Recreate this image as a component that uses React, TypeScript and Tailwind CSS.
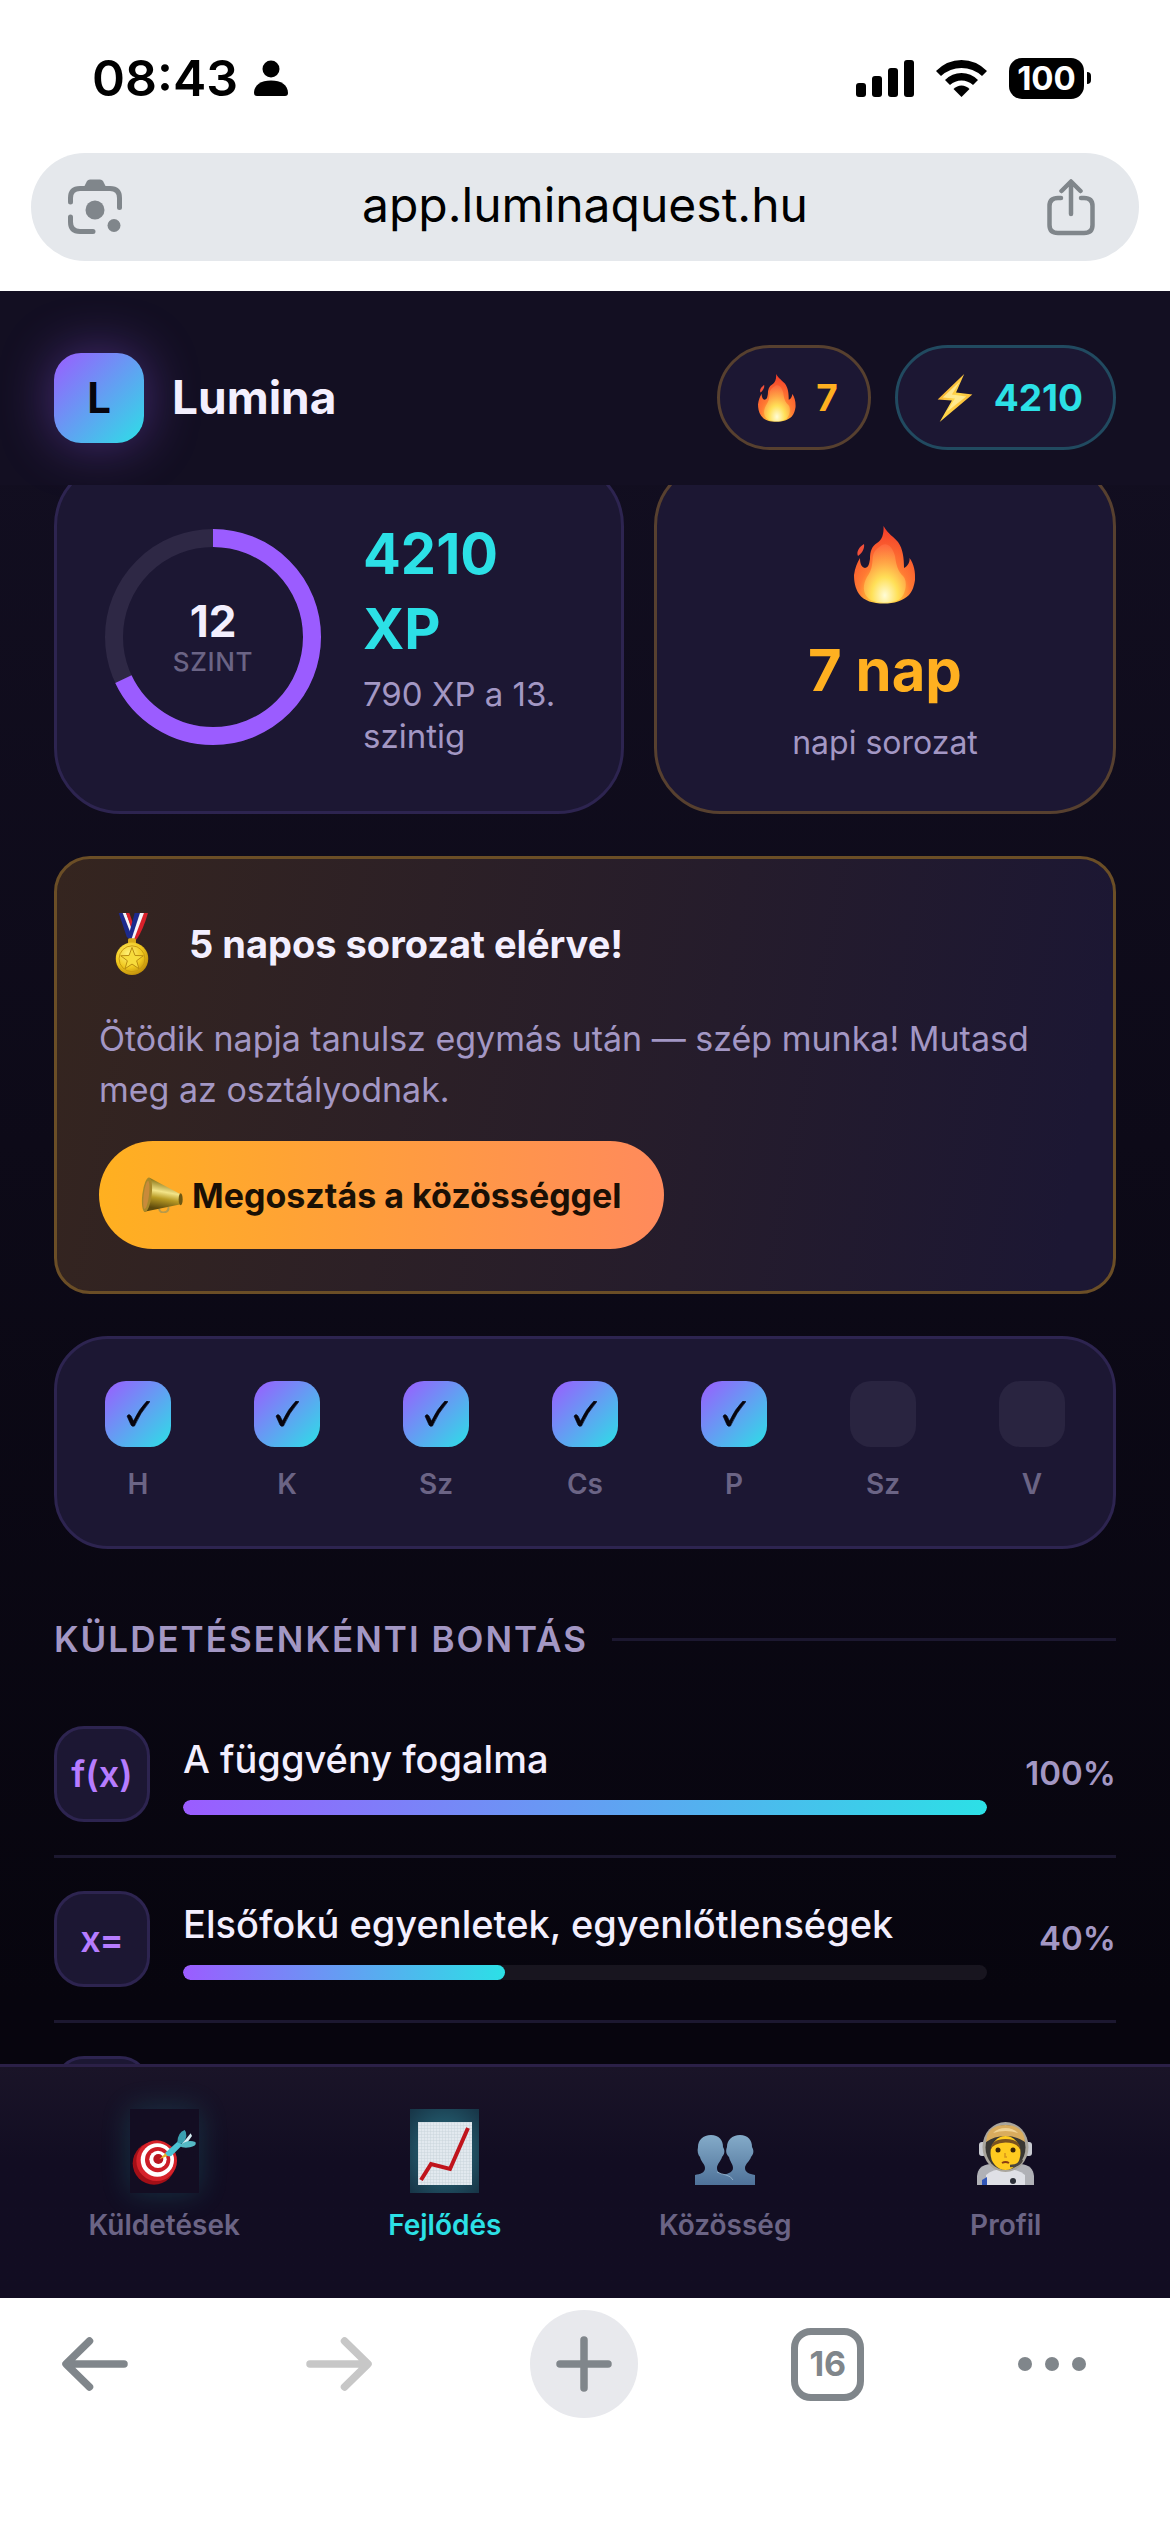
import type { ReactNode } from 'react';

type Day = { label: string; done: boolean };

type Quest = {
  symbol: string;
  title: string;
  percent: number;
};

type Tab = {
  label: string;
  icon: ReactNode;
  active?: boolean;
};

const days: Day[] = [
  { label: 'H', done: true },
  { label: 'K', done: true },
  { label: 'Sz', done: true },
  { label: 'Cs', done: true },
  { label: 'P', done: true },
  { label: 'Sz', done: false },
  { label: 'V', done: false },
];

const quests: Quest[] = [
  { symbol: 'f(x)', title: 'A függvény fogalma', percent: 100 },
  { symbol: 'x=', title: 'Elsőfokú egyenletek, egyenlőtlenségek', percent: 40 },
  { symbol: '', title: '', percent: 0 },
];

function Flame({ className }: { className: string }) {
  return (
    <svg viewBox="0 0 62 78" className={className} aria-hidden="true">
      <defs>
        <radialGradient id="flameOuter" cx="0.5" cy="0.9" r="0.85">
          <stop offset="0" stopColor="#fff6a0" />
          <stop offset="0.25" stopColor="#ffc93a" />
          <stop offset="0.5" stopColor="#ff7a33" />
          <stop offset="1" stopColor="#f5402a" />
        </radialGradient>
        <radialGradient id="flameInner" cx="0.5" cy="0.88" r="0.9">
          <stop offset="0" stopColor="#fffde0" />
          <stop offset="0.35" stopColor="#ffe45c" />
          <stop offset="0.7" stopColor="#ffa046" />
          <stop offset="1" stopColor="#ff6340" />
        </radialGradient>
      </defs>
      <path
        d="M29.500 0C34 8 40 11 44 16C49 23 50 32 50 42C54 40 56 36 55.500 32C60 38 61.500 46 61 54C60 60 59 64 55 69C49 75 40 77.500 30 77.500C19 77.500 10 75 5 68C1 62 0 55 0 49C1 42 3 37 6 32C6 37 7 41 11 42C15 41 15 38 16 33C16 25 18 20 23 17C28 14 30 8 29.500 0Z"
        fill="url(#flameOuter)"
      />
      <path
        d="M28 19C34 16 39 22 41 30C42 38 44 46 49 50C54 55 52 68 46 73C40 77 22 78 15 73C8 67 9 58 13 51C19 43 18 36 19 30C20 24 24 22 28 19Z"
        fill="url(#flameInner)"
        opacity="0.85"
      />
      <path d="M10 18C11 23 7 28 4 30C2 26 5 21 10 18Z" fill="#f2503a" />
    </svg>
  );
}

function Bolt() {
  return (
    <svg viewBox="0 0 34 47" className="h-12 w-[42px]" aria-hidden="true">
      <defs>
        <linearGradient id="bolt" x1="0" y1="0" x2="1" y2="1">
          <stop offset="0" stopColor="#f08c1c" />
          <stop offset="0.5" stopColor="#ffd84a" />
          <stop offset="1" stopColor="#f59a1f" />
        </linearGradient>
      </defs>
      <path d="M26 0L0 25L14 26L2 47L34 20L18 18Z" fill="url(#bolt)" />
      <path d="M22 7L5 23L17 24L9 37L28 22L14 20Z" fill="#fff0a0" opacity="0.8" />
    </svg>
  );
}

function Medal() {
  return (
    <svg viewBox="0 0 100 190" className="h-[63px] w-[66px]" aria-hidden="true">
      <defs>
        <radialGradient id="medal" cx="0.4" cy="0.35" r="0.7">
          <stop offset="0" stopColor="#fff27a" />
          <stop offset="0.6" stopColor="#f0c81e" />
          <stop offset="1" stopColor="#b98708" />
        </radialGradient>
      </defs>
      <path d="M10 0H22L50 62L42 80L34 72Z" fill="#1c2a8c" />
      <path d="M22 0H32L54 56L48 66Z" fill="#f4f4f8" />
      <path d="M32 0H42L58 46L52 58Z" fill="#d8202a" />
      <path d="M98 0H84L54 80H64Q84 50 98 0Z" fill="#d8202a" />
      <path d="M86 0H72L44 76L56 80Z" fill="#f4f4f8" />
      <path d="M74 0H58L38 74L48 80Z" fill="#1c2a8c" />
      <rect x="38" y="76" width="24" height="18" rx="5" fill="#d9ab1a" />
      <circle cx="50" cy="138" r="49" fill="url(#medal)" />
      <circle cx="50" cy="138" r="39" fill="none" stroke="#c99a10" strokeWidth="3" />
      <path
        d="M50 104L59 128L84 129L64 144L71 168L50 154L29 168L36 144L16 129L41 128Z"
        fill="#f7dc3c"
        stroke="#b98c10"
        strokeWidth="3"
      />
    </svg>
  );
}

function Megaphone() {
  return (
    <svg viewBox="0 0 126 108" className="h-9 w-[42px]" aria-hidden="true">
      <defs>
        <linearGradient id="horn" x1="0.5" y1="0" x2="0.3" y2="1">
          <stop offset="0.1" stopColor="#8f7a1c" />
          <stop offset="0.4" stopColor="#f3e488" />
          <stop offset="0.6" stopColor="#b89a24" />
          <stop offset="0.9" stopColor="#5e4a0c" />
        </linearGradient>
      </defs>
      <path d="M54 94Q56 108 70 106Q84 104 82 90" fill="none" stroke="#b89a4a" strokeWidth="6" />
      <path d="M26 2L116 50Q126 64 120 82L10 104Z" fill="url(#horn)" />
      <ellipse cx="18" cy="53" rx="14" ry="52" fill="#a8882a" transform="rotate(7 18 53)" />
      <ellipse cx="16" cy="54" rx="8" ry="42" fill="#c98a3a" transform="rotate(7 16 54)" />
      <ellipse cx="119" cy="67" rx="6" ry="18" fill="#6e5812" />
    </svg>
  );
}

function TargetIcon() {
  return (
    <svg viewBox="0 0 195 165" className="w-[65px]" aria-hidden="true">
      <circle cx="66" cy="100" r="64" fill="#a30f17" />
      <circle cx="74" cy="92" r="61" fill="#d6222a" />
      <circle cx="76" cy="90" r="50" fill="#fff" />
      <circle cx="77" cy="89" r="38" fill="#cc1d26" />
      <circle cx="78" cy="88" r="26" fill="#fff" />
      <circle cx="79" cy="87" r="15" fill="#b8161f" />
      <path d="M82 88L108 62L116 74Z" fill="#e5b427" />
      <path d="M100 68L138 34L152 44L118 78Q106 82 100 68Z" fill="#4cc4d4" />
      <path d="M136 38Q136 8 158 0Q170 12 154 42Z" fill="#3aa0b0" />
      <path d="M148 44L176 10L180 18L160 46Z" fill="#d5eef2" />
      <path d="M142 48Q166 26 190 36Q196 48 174 52Q154 56 142 48Z" fill="#55b9c4" />
    </svg>
  );
}

function ChartIcon() {
  return (
    <svg viewBox="0 0 54 63" className="w-[54px]" aria-hidden="true">
      <defs>
        <pattern id="chartGrid" width="3" height="3" patternUnits="userSpaceOnUse">
          <path d="M3 0H0V3" fill="none" stroke="#c3cfd8" strokeWidth="0.8" />
        </pattern>
      </defs>
      <rect width="54" height="63" fill="#e2e9ef" />
      <rect width="54" height="63" fill="url(#chartGrid)" />
      <path d="M3 58L13 42L32 47L50 6" fill="none" stroke="#c0141c" strokeWidth="4" />
    </svg>
  );
}

function PeopleIcon() {
  return (
    <svg viewBox="0 0 60 50" className="w-[60px]" aria-hidden="true">
      <defs>
        <linearGradient id="people" x1="0" y1="0" x2="0" y2="1">
          <stop offset="0" stopColor="#84abc9" />
          <stop offset="1" stopColor="#4f7299" />
        </linearGradient>
      </defs>
      <path
        d="M45 0C37 0 32 5 32 12C30 17 32 20 34 22C35 27 38 29 38 33C38 38 31 39 27 40V50H60V40C54 39 50 37 50 33C50 29 55 26 56 22C59 19 59 15 57 12C57 5 53 0 45 0Z"
        fill="url(#people)"
      />
      <path
        d="M16 0C8 0 3 5 3 12C2 16 3 20 5 22C6 27 10 29 10 33C10 38 5 39 0 40V50H38C38 43 35 41 30 40C25 39 22 37 22 33C22 29 26 26 27 22C30 19 30 15 28 12C28 5 24 0 16 0Z"
        fill="url(#people)"
      />
      <path d="M22 37Q26 39 31 40Q36 41 38 45" fill="none" stroke="#9dbdd6" strokeWidth="0.8" />
    </svg>
  );
}

function AstronautIcon() {
  return (
    <svg viewBox="0 0 57 63" className="w-[57px]" aria-hidden="true">
      <path d="M0 63V54Q1 43 13 42H44Q56 43 57 54V63Z" fill="#b0b1b6" />
      <path d="M9 63V53Q15 47 28 47Q42 47 48 53V63Z" fill="#dfe0e6" />
      <path d="M5 58L10 55V63H5Z" fill="#3156b8" />
      <rect x="2" y="20" width="7" height="14" rx="3" fill="#c9cbd1" />
      <rect x="48" y="20" width="7" height="14" rx="3" fill="#c9cbd1" />
      <ellipse cx="28.500" cy="25" rx="23" ry="25" fill="#a9a59c" />
      <ellipse cx="28.500" cy="25.500" rx="20" ry="22.500" fill="#3a3834" />
      <ellipse cx="28.500" cy="31" rx="15" ry="17" fill="#ffcb20" />
      <path d="M13.500 28Q14 17 28.500 17T43.500 28Q41 21 28.500 20.500Q16 21 13.500 28Z" fill="#7a5220" />
      <path d="M9 20Q10 3 28.500 3Q47 3 48 20Q40 14 28.500 14Q17 14 9 20Z" fill="#d9ac5e" />
      <path d="M16 11Q21 6 28.500 6Q36 6 41 11Q35 9 28.500 9Q22 9 16 11Z" fill="#f0d294" />
      <circle cx="21" cy="28" r="2.500" fill="#3b2508" />
      <circle cx="36" cy="28" r="2.500" fill="#3b2508" />
      <path d="M28 31V35H30" fill="none" stroke="#d9971c" strokeWidth="1.500" />
      <path d="M25 41Q28.500 39 32 41" fill="none" stroke="#8a3d12" strokeWidth="2" />
      <path d="M45 38Q42 44 33 44" fill="none" stroke="#4a463f" strokeWidth="2.500" />
      <circle cx="36" cy="59" r="3" fill="#2c2f38" />
    </svg>
  );
}

const tabs: Tab[] = [
  { label: 'Küldetések', icon: <TargetIcon /> },
  { label: 'Fejlődés', icon: <ChartIcon />, active: true },
  { label: 'Közösség', icon: <PeopleIcon /> },
  { label: 'Profil', icon: <AstronautIcon /> },
];

function StatusBar() {
  return (
    <div className="flex h-15 items-center justify-between pr-[79px] pl-23 text-black">
      <div className="flex items-center gap-4">
        <span className="text-[50px] leading-none font-semibold">08:43</span>
        <svg viewBox="0 0 34 36" className="w-[34px]" aria-hidden="true">
          <circle cx="17" cy="9" r="8.500" />
          <path d="M0 33C0 25 7 20.500 17 20.500S34 25 34 33Q34 36 31 36H3Q0 36 0 33Z" />
        </svg>
      </div>
      <div className="flex items-center gap-[22px]">
        <svg viewBox="0 0 58 37" className="w-[58px]" aria-hidden="true">
          <rect x="0" y="23" width="10" height="14" rx="3" />
          <rect x="16" y="16" width="10" height="21" rx="3" />
          <rect x="32" y="8" width="10" height="29" rx="3" />
          <rect x="48" y="0" width="10" height="37" rx="3" />
        </svg>
        <svg viewBox="0 0 51 37" className="w-[51px]" aria-hidden="true">
          <path d="M0 11Q11 0 25.500 0T51 11L46 16Q37 8 25.500 8T5 16Z" />
          <path d="M9 20Q16 13 25.500 13T42 20L37 25Q32 20.500 25.500 20.500T14 25Z" />
          <path d="M17.500 29Q21 25.500 25.500 25.500T33.500 29L25.500 37Z" />
        </svg>
        <div className="flex items-center gap-[3px]">
          <span className="flex h-[41px] w-[75px] items-center justify-center rounded-[13px] bg-black text-[33px] leading-none font-bold text-white">
            100
          </span>
          <span className="h-3 w-1 rounded-r-full bg-black" />
        </div>
      </div>
    </div>
  );
}

function AddressBar() {
  return (
    <div className="mx-[31px] mt-[45px] flex h-27 items-center justify-between rounded-full bg-[#e5e8ec] pr-11 pl-9 text-[#80868b]">
      <button type="button" aria-label="Keresés képpel">
        <svg viewBox="0 0 56 56" className="w-14" fill="none" stroke="currentColor" strokeWidth="5" strokeLinecap="round">
          <path d="M3.500 23V19Q3.500 9.500 13 9.500H43Q52.500 9.500 52.500 19V28.500" />
          <path d="M3.500 38V43Q3.500 52.500 13 52.500H26" />
          <path d="M17 8L20 2Q21 .500 23 .500H33Q35 .500 36 2L39 8Z" fill="currentColor" stroke="none" />
          <circle cx="28" cy="31" r="9.500" fill="currentColor" stroke="none" />
          <circle cx="47" cy="46.500" r="6.500" fill="currentColor" stroke="none" />
        </svg>
      </button>
      <a href="#" className="pb-1 text-[48px] leading-none text-black">
        app.luminaquest.hu
      </a>
      <button type="button" aria-label="Megosztás">
        <svg viewBox="0 0 48 57" className="w-12" fill="none" stroke="currentColor" strokeWidth="4.500" strokeLinecap="round" strokeLinejoin="round">
          <path d="M14 19H11Q2.500 19 2.500 27V46Q2.500 54 11 54H37Q45.500 54 45.500 46V27Q45.500 19 37 19H34" />
          <path d="M24 35V3M14.500 12L24 2.500L33.500 12" />
        </svg>
      </button>
    </div>
  );
}

function AppHeader() {
  return (
    <header className="flex items-center justify-between bg-[#130f22] px-[54px] pt-[54px] pb-[35px]">
      <div className="flex items-center gap-7">
        <div className="flex size-[90px] items-center justify-center rounded-[27px] bg-linear-to-br/srgb from-[#9b5cff] to-[#2ce0e6] text-[42px] font-bold text-[#07050e] shadow-[0_0_54px_rgba(155,92,255,0.4)]">
          L
        </div>
        <span className="text-[46px] font-bold text-[#f3effe]">Lumina</span>
      </div>
      <div className="flex gap-6 text-[37px] font-bold">
        <div className="flex h-[105px] items-center gap-[18px] rounded-full border-3 border-[#57402f] bg-[#1c1733] px-[30px] pl-9 text-[#ffb020]">
          <span className="flex w-[42px] justify-center">
            <Flame className="h-12" />
          </span>
          7
        </div>
        <div className="flex h-[105px] items-center gap-[18px] rounded-full border-3 border-[#214a60] bg-[#1c1733] pr-[30px] pl-9 text-[#2ce0e6]">
          <Bolt />
          4210
        </div>
      </div>
    </header>
  );
}

function LevelRing() {
  return (
    <div className="grid size-54 shrink-0 place-items-center">
      <svg viewBox="0 0 216 216" className="col-start-1 row-start-1 size-full -rotate-90" aria-hidden="true">
        <circle cx="108" cy="108" r="99" fill="none" stroke="#2e2845" strokeWidth="18" />
        <circle
          cx="108"
          cy="108"
          r="99"
          fill="none"
          stroke="#9b5cff"
          strokeWidth="18"
          pathLength="100"
          strokeDasharray="68 100"
        />
      </svg>
      <div className="col-start-1 row-start-1 text-center">
        <div className="text-[44px] leading-[50px] font-bold text-[#f3effe]">12</div>
        <div className="text-[26px] leading-8 font-medium tracking-wide text-[#6b6485]">SZINT</div>
      </div>
    </div>
  );
}

function Stats() {
  return (
    <section className="grid grid-cols-[570fr_462fr] gap-[30px]">
      <div className="flex h-[354px] items-center gap-[42px] rounded-[66px] border-3 border-[#2d2450] bg-[#1c1733] px-12">
        <LevelRing />
        <div>
          <div className="w-min text-[56px] leading-[75px] font-bold text-[#2ce0e6]">4210 XP</div>
          <div className="mt-[6px] text-[33px] leading-[42px] text-[#a397c4]">790 XP a 13. szintig</div>
        </div>
      </div>
      <div className="flex h-[354px] flex-col items-center justify-center rounded-[66px] border-3 border-[#57402f] bg-[#1c1733] pt-4">
        <Flame className="h-[78px]" />
        <div className="mt-[29px] text-[58px] leading-[75px] font-bold text-[#ffb020]">7 nap</div>
        <div className="mt-[14px] text-[32px] leading-[42px] text-[#a397c4]">napi sorozat</div>
      </div>
    </section>
  );
}

function StreakBanner() {
  return (
    <section className="mt-[42px] rounded-[36px] border-3 border-[#6b4e26] bg-linear-100/srgb from-[#35251f] to-[#1c1733] to-95% p-[42px]">
      <div className="flex items-center gap-6">
        <Medal />
        <h2 className="text-[38px] leading-[86px] font-bold text-[#f3effe]">5 napos sorozat elérve!</h2>
      </div>
      <p className="mt-[26px] text-[34px] leading-[51px] text-[#a397c4]">
        Ötödik napja tanulsz egymás után — szép munka! Mutasd meg az osztályodnak.
      </p>
      <button
        type="button"
        className="mt-[26px] flex h-27 items-center gap-[9px] rounded-full bg-linear-to-r/srgb from-[#ffb020] to-[#ff8a5c] px-[42px] text-[34px] font-bold text-[#1a1005]"
      >
        <Megaphone />
        Megosztás a közösséggel
      </button>
    </section>
  );
}

function WeekCard() {
  return (
    <section className="mt-[42px] flex justify-between rounded-[54px] border-3 border-[#2d2450] bg-[#1c1733] px-12 py-[42px]">
      {days.map((day, idx) => (
        <div key={idx} className="flex w-[66px] flex-col items-center gap-[18px]">
          <div
            className={`flex size-[66px] items-center justify-center rounded-[21px] ${
              day.done ? 'bg-linear-to-br/srgb from-[#9b5cff] to-[#2ce0e6]' : 'bg-[#292440]'
            }`}
          >
            {day.done && (
              <svg viewBox="0 0 24 26" className="h-[26px]" aria-label="kész">
                <path d="M1 15Q3 12 5 15L7.500 20Q13 8 21 0L24 .500Q14 12 8.500 25Q6 26 5 24Z" fill="#07050e" stroke="#07050e" strokeWidth="0.6" strokeLinejoin="round" />
              </svg>
            )}
          </div>
          <span className="text-[28px] leading-[39px] font-semibold text-[#6b6485]">{day.label}</span>
        </div>
      ))}
    </section>
  );
}

function QuestRow({ quest }: { quest: Quest }) {
  return (
    <li className="flex items-center border-b-3 border-[#1c1830] py-[33px]">
      <div className="flex size-24 shrink-0 items-center justify-center rounded-[30px] border-3 border-[#2d2450] bg-[#1c1733] text-[36px] font-semibold text-[#b67cff]">
        {quest.symbol}
      </div>
      <div className="ml-[33px] flex-1">
        <div className="text-[38px] leading-[51px] font-medium text-[#f3effe]">{quest.title}</div>
        <div className="mt-[15px] h-[15px] overflow-hidden rounded-full bg-[#18151f]">
          <div
            className="h-full rounded-full bg-linear-to-r/srgb from-[#9b5cff] to-[#2ce0e6]"
            style={{ width: `${quest.percent}%` }}
          />
        </div>
      </div>
      <div className="ml-[33px] w-24 text-right text-[33px] font-semibold text-[#a397c4]">
        {quest.title && `${quest.percent}%`}
      </div>
    </li>
  );
}

function TabBar() {
  return (
    <nav className="grid grid-cols-4 border-t-3 border-[#2b2047] bg-linear-to-b from-[#1a1428] to-[#120d22] to-40% px-6 pt-[42px] pb-[55px]">
      {tabs.map((tab) => (
        <a
          key={tab.label}
          href="#"
          className={`flex flex-col items-center gap-[14px] text-[28px] leading-9 font-semibold ${
            tab.active ? 'text-[#2ce0e6]' : 'text-[#6b6485]'
          }`}
        >
          <span
            className={`flex h-[84px] w-[69px] items-end justify-center pb-2 ${
              tab.active ? 'bg-radial from-[#2a7385] to-[#173446]' : ''
            } ${tab.label === 'Küldetések' ? 'bg-[#130d22] shadow-[0_0_30px_rgba(44,224,230,0.18)]' : ''}`}
          >
            {tab.icon}
          </span>
          {tab.label}
        </a>
      ))}
    </nav>
  );
}

function BrowserToolbar() {
  return (
    <div className="flex items-center justify-between bg-white pt-3 pr-21 pb-[114px] pl-[41px] text-[#80868b]">
      <button type="button" aria-label="Vissza" className="flex size-27 items-center justify-center">
        <svg viewBox="0 0 66 54" className="w-[66px]" fill="none" stroke="currentColor" strokeWidth="7.500" strokeLinecap="round" strokeLinejoin="round">
          <path d="M62 27H5M27.500 4L4 27L27.500 50" />
        </svg>
      </button>
      <button type="button" aria-label="Előre" className="flex size-27 items-center justify-center text-[#c7c7c7]">
        <svg viewBox="0 0 66 54" className="w-[66px]" fill="none" stroke="currentColor" strokeWidth="7.500" strokeLinecap="round" strokeLinejoin="round">
          <path d="M4 27H61M38.500 4L62 27L38.500 50" />
        </svg>
      </button>
      <button type="button" aria-label="Új lap" className="flex size-27 items-center justify-center rounded-full bg-[#e8e9ed]">
        <svg viewBox="0 0 56 56" className="w-14" fill="none" stroke="currentColor" strokeWidth="7.500" strokeLinecap="round">
          <path d="M4 28H52M28 4V52" />
        </svg>
      </button>
      <button type="button" aria-label="Lapok" className="flex size-27 items-center justify-center">
        <span className="flex size-[73px] items-center justify-center rounded-[20px] border-7 border-[#80868b] text-[34px] leading-none font-bold">
          16
        </span>
      </button>
      <button type="button" aria-label="Menü" className="flex h-27 items-center">
        <svg viewBox="0 0 68 14" className="w-[68px]" fill="currentColor">
          <circle cx="7" cy="7" r="7" />
          <circle cx="34" cy="7" r="7" />
          <circle cx="61" cy="7" r="7" />
        </svg>
      </button>
    </div>
  );
}

export default function App() {
  return (
    <div className="flex h-screen flex-col bg-white font-['Inter','Noto_Sans',sans-serif]">
      <div className="pt-12 pb-[30px]">
        <StatusBar />
        <AddressBar />
      </div>

      <div className="flex min-h-0 flex-1 flex-col bg-linear-to-b/srgb from-[#130f22] to-[#07050e] to-85%">
        <AppHeader />

        {/* Scrolled content, cut off by the header and the tab bar */}
        <main className="min-h-0 flex-1 overflow-hidden px-[54px]">
          <div className="-mt-[25px]">
            <Stats />
            <StreakBanner />
            <WeekCard />

            <div className="mt-[60px] flex items-center gap-6">
              <h2 className="text-[35px] leading-[60px] font-semibold tracking-[2px] text-[#a397c4]">
                KÜLDETÉSENKÉNTI BONTÁS
              </h2>
              <div className="h-[3px] flex-1 bg-[#1c1830]" />
            </div>

            <ul className="mt-6">
              {quests.map((quest, idx) => (
                <QuestRow key={idx} quest={quest} />
              ))}
            </ul>
          </div>
        </main>

        <TabBar />
      </div>

      <BrowserToolbar />
    </div>
  );
}
